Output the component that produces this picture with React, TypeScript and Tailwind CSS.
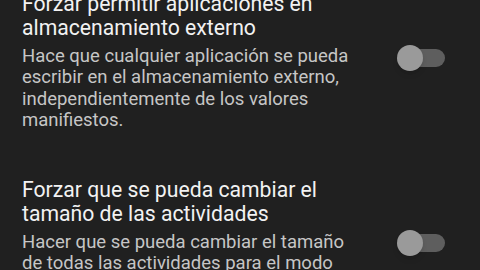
import { useState } from 'react';

interface AjusteProps {
  titulo: string;
  descripcion: string;
}

function Interruptor({ activo, onClick }: { activo: boolean; onClick: () => void }) {
  return (
    <button
      type="button"
      onClick={onClick}
      className="relative mb-[8px] flex h-[26px] w-[50px] shrink-0 items-center"
    >
      <span className="absolute left-[4px] right-[2px] h-[18px] rounded-full bg-[#5e5e5e]" />
      <span
        className={
          activo
            ? 'absolute right-0 h-[26px] w-[26px] rounded-full bg-[#a0a0a0] shadow-md'
            : 'absolute left-0 h-[26px] w-[26px] rounded-full bg-[#9a9a9a] shadow-md'
        }
      />
    </button>
  );
}

function Ajuste({ titulo, descripcion }: AjusteProps) {
  const [activo, setActivo] = useState(false);

  return (
    <div className="flex items-center gap-[37px] py-[23px] pl-[22px] pr-[33px]">
      <div className="flex min-w-0 flex-1 flex-col gap-[6px]">
        <div className="text-[21.2px] leading-[24px] text-[#f2f2f2]">{titulo}</div>
        <div className="text-[18.5px] leading-[21.4px] text-[#c6c6c6]">{descripcion}</div>
      </div>
      <Interruptor activo={activo} onClick={() => setActivo(!activo)} />
    </div>
  );
}

export default function App() {
  return (
    <div
      className="h-[270px] w-[480px] overflow-hidden bg-[#202020]"
      style={{ fontFamily: 'Roboto, "Noto Sans", sans-serif' }}
    >
      <div className="-mt-[31px]">
        <Ajuste
          titulo="Forzar permitir aplicaciones en almacenamiento externo"
          descripcion="Hace que cualquier aplicación se pueda escribir en el almacenamiento externo, independientemente de los valores manifiestos."
        />
        <Ajuste
          titulo="Forzar que se pueda cambiar el tamaño de las actividades"
          descripcion="Hacer que se pueda cambiar el tamaño de todas las actividades para el modo multiventana, independientemente de los valores del manifiesto."
        />
      </div>
    </div>
  );
}
